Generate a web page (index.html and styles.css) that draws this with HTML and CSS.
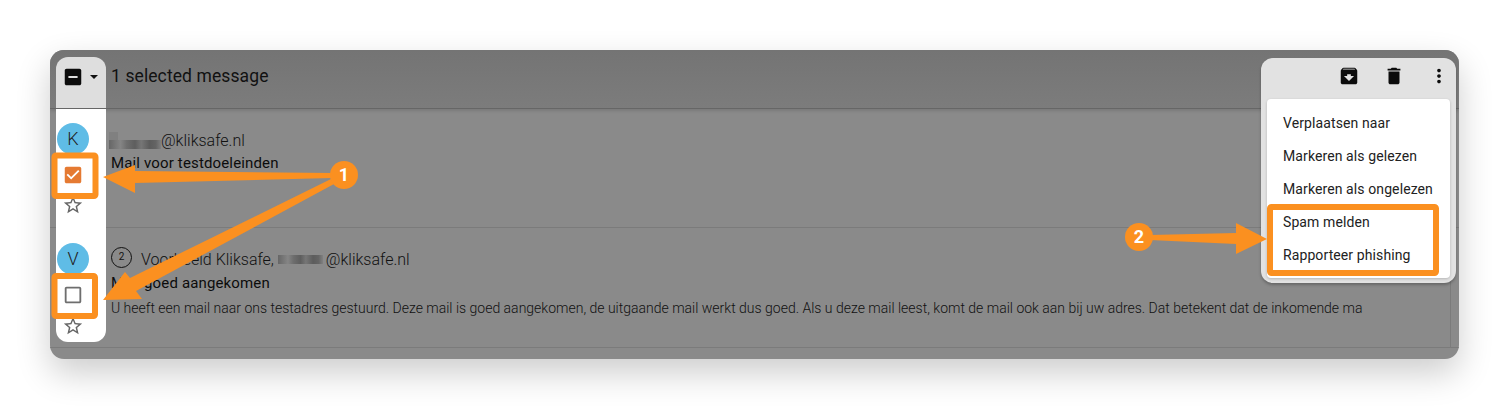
FILE: index.html
```html
<!DOCTYPE html>
<html lang="en">
<head>
    <meta charset="UTF-8">
    <title>Kliksafe mail</title>
    <link rel="stylesheet" href="styles.css">
</head>
<body>
    <div class="page">
        <div class="window">
            <div class="header">
                <div class="select-cell">
                    <svg class="icon" viewBox="0 0 24 24"><path d="M19 3H5c-1.1 0-2 .9-2 2v14c0 1.1.9 2 2 2h14c1.1 0 2-.9 2-2V5c0-1.1-.9-2-2-2zm-2 10H7v-2h10v2z"/></svg>
                    <span class="caret"></span>
                </div>
                <div class="header-title">1 selected message</div>
            </div>

            <div class="row row-first">
                <div class="side">
                    <div class="avatar">K</div>
                    <svg class="icon check-on" viewBox="0 0 24 24"><path d="M19 3H5c-1.11 0-2 .9-2 2v14c0 1.1.89 2 2 2h14c1.11 0 2-.9 2-2V5c0-1.1-.89-2-2-2zm-9 14l-5-5 1.41-1.41L10 14.17l7.59-7.59L19 8l-9 9z"/></svg>
                    <svg class="star" viewBox="0 0 24 24"><path d="M22 9.24l-7.19-.62L12 2 9.19 8.63 2 9.24l5.46 4.73L5.82 21 12 17.27 18.18 21l-1.63-7.03L22 9.24zM12 15.4l-3.76 2.27 1-4.28-3.32-2.88 4.38-.38L12 6.1l1.71 4.04 4.38.38-3.32 2.88 1 4.28L12 15.4z"/></svg>
                </div>
                <div class="mail">
                    <div class="sender"><span class="blur blur-wide"></span>@kliksafe.nl</div>
                    <div class="subject">Mail voor testdoeleinden</div>
                </div>
            </div>

            <div class="row row-second">
                <div class="side">
                    <div class="avatar">V</div>
                    <svg class="icon check-off" viewBox="0 0 24 24"><path d="M19 5v14H5V5h14m0-2H5c-1.1 0-2 .9-2 2v14c0 1.1.9 2 2 2h14c1.1 0 2-.9 2-2V5c0-1.1-.9-2-2-2z"/></svg>
                    <svg class="star" viewBox="0 0 24 24"><path d="M22 9.24l-7.19-.62L12 2 9.19 8.63 2 9.24l5.46 4.73L5.82 21 12 17.27 18.18 21l-1.63-7.03L22 9.24zM12 15.4l-3.76 2.27 1-4.28-3.32-2.88 4.38-.38L12 6.1l1.71 4.04 4.38.38-3.32 2.88 1 4.28L12 15.4z"/></svg>
                </div>
                <div class="mail">
                    <div class="sender"><span class="count">2</span>Voorbeeld Kliksafe, <span class="blur blur-small"></span>@kliksafe.nl</div>
                    <div class="subject">Mail goed aangekomen</div>
                    <div class="snippet">U heeft een mail naar ons testadres gestuurd. Deze mail is goed aangekomen, de uitgaande mail werkt dus goed. Als u deze mail leest, komt de mail ook aan bij uw adres. Dat betekent dat de inkomende ma</div>
                </div>
            </div>

            <div class="actions">
                <div class="action-icons">
                    <svg class="icon" viewBox="0 0 24 24"><path d="M20.54 5.23l-1.39-1.68C18.88 3.21 18.47 3 18 3H6c-.47 0-.88.21-1.16.55L3.46 5.23C3.17 5.57 3 6.02 3 6.5V19c0 1.1.9 2 2 2h14c1.1 0 2-.9 2-2V6.5c0-.48-.17-.93-.46-1.27zM12 17.5L6.5 12H10v-2h4v2h3.5L12 17.5zM5.12 5l.81-1h12l.94 1H5.12z"/></svg>
                    <svg class="icon" viewBox="0 0 24 24"><path d="M6 19c0 1.1.9 2 2 2h8c1.1 0 2-.9 2-2V7H6v12zM19 4h-3.5l-1-1h-5l-1 1H5v2h14V4z"/></svg>
                    <svg class="icon" viewBox="0 0 24 24"><path d="M12 8c1.1 0 2-.9 2-2s-.9-2-2-2-2 .9-2 2 .9 2 2 2zm0 2c-1.1 0-2 .9-2 2s.9 2 2 2 2-.9 2-2-.9-2-2-2zm0 6c-1.1 0-2 .9-2 2s.9 2 2 2 2-.9 2-2-.9-2-2-2z"/></svg>
                </div>
                <ul class="menu">
                    <li>Verplaatsen naar</li>
                    <li>Markeren als gelezen</li>
                    <li>Markeren als ongelezen</li>
                    <li>Spam melden</li>
                    <li>Rapporteer phishing</li>
                </ul>
            </div>
        </div>

        <!-- annotations on top of the screenshot -->
        <svg class="notes" viewBox="0 0 1509 409">
            <rect class="note-box" x="54.5" y="155.5" width="41" height="40.5" rx="1.5"/>
            <rect class="note-box" x="54.5" y="276" width="40.5" height="40" rx="1.5"/>
            <rect class="note-box" x="1270" y="207" width="166" height="66" rx="1.5"/>
            <polygon class="note-fill" points="103,177 135,165 135,171 332,173 332,178 135,183 135,193"/>
            <polygon class="note-fill" points="103,300 125,272 130,278 331,179 334,184 136,291 142,299"/>
            <polygon class="note-fill" points="1267,239 1236,223 1236,233 1150,235 1150,240 1236,244 1236,254"/>
            <circle class="note-fill" cx="344" cy="175" r="14"/>
            <circle class="note-fill" cx="1139" cy="237" r="14"/>
            <text class="note-num" x="344" y="181">1</text>
            <text class="note-num" x="1139" y="243">2</text>
        </svg>
    </div>
</body>
</html>
```

FILE: styles.css
```css
* {
    box-sizing: border-box;
}
html, body {
    margin: 0;
    height: 100%;
    overflow: hidden;
    background: white;
}
body {
    font-family: Roboto, 'Liberation Sans', sans-serif;
    color: #111;
}
.page {
    position: relative;
    height: 409px;
    padding: 50px;
}
.window {
    position: relative;
    height: 309px;
    background: #8a8a8a;
    border-radius: 14px;
    box-shadow: 0 14px 34px rgba(0,0,0,0.2);
    overflow: hidden;
}
.header {
    display: flex;
    height: 59px;
    padding-top: 7px;
    background: linear-gradient(#747474, #7c7c7c);
    border-bottom: 1px solid #666;
    box-shadow: 0 2px 3px rgba(0,0,0,0.12);
}
.select-cell {
    display: flex;
    align-items: center;
    width: 50px;
    height: 51px;
    margin-left: 6px;
    padding: 0 0 12px 6px;
    background: #dedede;
    border-radius: 12px 12px 0 0;
}
.caret {
    width: 0;
    height: 0;
    margin-left: 6px;
    border: 4px solid transparent;
    border-top: 4px solid #111;
    border-bottom: none;
}
.header-title {
    margin: 9px 0 0 5px;
    font-size: 17.5px;
    line-height: 20px;
    letter-spacing: 0.1px;
}
.icon {
    display: block;
    flex: none;
    width: 22px;
    height: 22px;
    fill: #0c0c0c;
}
.row {
    display: flex;
    border-bottom: 1px solid #7b7b7b;
}
.row-first {
    height: 119px;
}
.row-second {
    height: 120px;
}
.side {
    display: flex;
    flex-direction: column;
    align-items: center;
    width: 50px;
    margin-left: 6px;
    padding-right: 16px;
    padding-top: 14px;
    background: white;
}
.row-first .side {
    margin-bottom: -1px;
}
.row-second .side {
    height: 114px;
    padding-top: 15px;
    border-radius: 0 0 12px 12px;
}
.avatar {
    flex: none;
    width: 32px;
    height: 32px;
    line-height: 32px;
    text-align: center;
    font-size: 18px;
    font-weight: 300;
    border-radius: 50%;
    background: #5fbce6;
    color: #222;
}
.check-on {
    margin-top: 9px;
    fill: #e57a32;
}
.check-off {
    margin-top: 9px;
    fill: #6e6e6e;
}
.star {
    display: block;
    flex: none;
    width: 22px;
    height: 22px;
    margin-top: 8px;
    fill: #666;
}
.row-second .star {
    margin-top: 9px;
}
.mail {
    flex: 1;
    min-width: 0;
    margin-left: 5px;
    padding-top: 21px;
    border-right: 1px solid #7b7b7b;
    margin-right: 8px;
}
.sender {
    display: flex;
    align-items: center;
    height: 20px;
    font-size: 16px;
    font-weight: 300;
    white-space: pre;
}
.subject {
    margin-top: 3px;
    height: 20px;
    line-height: 20px;
    font-size: 15px;
    letter-spacing: 0.15px;
    color: #0c0c0c;
}
.row-second .subject {
    margin-top: 4px;
}
.snippet {
    margin-top: 5px;
    line-height: 20px;
    font-size: 14px;
    font-weight: 300;
    white-space: nowrap;
}
.blur {
    display: inline-block;
    height: 9px;
    background: linear-gradient(90deg, #666, #858585 22%, #6e6e6e 34%, #5e5e5e 50%, #767676 62%, #5c5c5c 78%, #646464 90%, #808080);
}
.blur-wide {
    position: relative;
    width: 52px;
    margin-left: -2px;
    margin-top: 8px;
}
.blur-wide::before {
    content: "";
    position: absolute;
    left: 0;
    top: -8px;
    width: 9px;
    height: 8px;
    background: #808080;
}
.blur-small {
    width: 45px;
    margin-right: 3px;
}
.count {
    display: inline-block;
    width: 21px;
    height: 21px;
    margin: -4px 9px 0 0;
    line-height: 18px;
    text-align: center;
    font-size: 10px;
    font-weight: 400;
    border: 1.5px solid #111;
    border-radius: 50%;
}
.actions {
    position: absolute;
    top: 8px;
    right: 3px;
    width: 195px;
    height: 225px;
    padding: 0 6px;
    background: #e2e2e2;
    border-radius: 12px;
    box-shadow: 0 2px 3px rgba(0,0,0,0.25);
}
.action-icons {
    display: flex;
    justify-content: flex-end;
    gap: 23px;
    height: 41px;
    padding-top: 7px;
}
.menu {
    list-style: none;
    height: 179px;
    margin: 0;
    padding: 8px 0;
    background: white;
    border-radius: 4px;
    box-shadow: 0 1px 3px rgba(0,0,0,0.2);
}
.menu li {
    height: 33px;
    line-height: 33px;
    padding-left: 16px;
    font-size: 14px;
    letter-spacing: 0.1px;
    color: #222;
}
.notes {
    position: absolute;
    top: 0;
    left: 0;
    width: 1509px;
    height: 409px;
}
.note-box {
    fill: none;
    stroke: #fb9020;
    stroke-width: 6;
}
.note-fill {
    fill: #fb9020;
}
.note-num {
    font-family: Roboto, sans-serif;
    font-size: 18px;
    font-weight: 700;
    text-anchor: middle;
    fill: white;
}
```
